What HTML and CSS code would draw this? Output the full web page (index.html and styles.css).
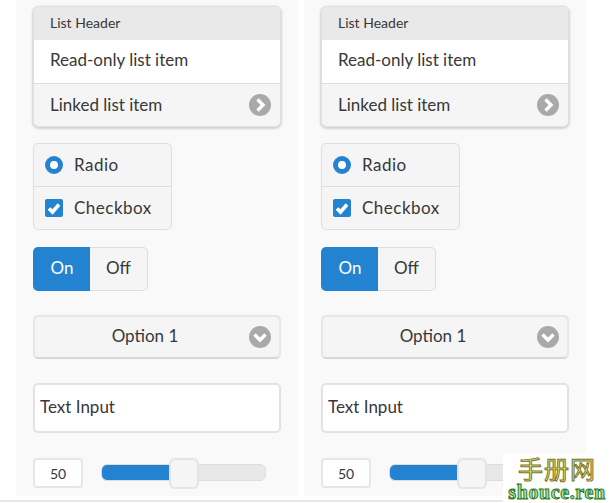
FILE: index.html
```html
<!DOCTYPE html>
<html lang="en">
<head>
    <meta charset="UTF-8">
    <meta name="viewport" content="width=device-width, initial-scale=1.0">
    <title>List and form widgets</title>
    <link rel="stylesheet" href="styles.css">
</head>
<body>
    <div class="page">
        <div class="panel">
            <div class="list">
                <div class="list-header">List Header</div>
                <div class="list-item">Read-only list item</div>
                <div class="list-item linked">Linked list item
                    <svg class="round-icon" viewBox="0 0 22 22"><circle cx="11" cy="11" r="11"/><path d="M8.5 5.5 L14 11 L8.5 16.5" /></svg>
                </div>
            </div>
            <div class="choices">
                <div class="choice">
                    <span class="radio"></span>Radio
                </div>
                <div class="choice">
                    <svg class="checkbox" viewBox="0 0 18 18"><rect width="18" height="18" rx="2"/><path d="M4 9.5 L7.5 13 L14 5.5"/></svg>Checkbox
                </div>
            </div>
            <div class="toggle">
                <div class="toggle-on">On</div>
                <div class="toggle-off">Off</div>
            </div>
            <div class="select">Option 1
                <svg class="round-icon" viewBox="0 0 22 22"><circle cx="11" cy="11" r="11"/><path d="M5.5 8.5 L11 14 L16.5 8.5" /></svg>
            </div>
            <div class="text-input">Text Input</div>
            <div class="slider-row">
                <div class="slider-value">50</div>
                <div class="slider">
                    <div class="slider-fill"></div>
                    <div class="slider-thumb"></div>
                </div>
            </div>
        </div>
        <div class="panel">
            <div class="list">
                <div class="list-header">List Header</div>
                <div class="list-item">Read-only list item</div>
                <div class="list-item linked">Linked list item
                    <svg class="round-icon" viewBox="0 0 22 22"><circle cx="11" cy="11" r="11"/><path d="M8.5 5.5 L14 11 L8.5 16.5" /></svg>
                </div>
            </div>
            <div class="choices">
                <div class="choice">
                    <span class="radio"></span>Radio
                </div>
                <div class="choice">
                    <svg class="checkbox" viewBox="0 0 18 18"><rect width="18" height="18" rx="2"/><path d="M4 9.5 L7.5 13 L14 5.5"/></svg>Checkbox
                </div>
            </div>
            <div class="toggle">
                <div class="toggle-on">On</div>
                <div class="toggle-off">Off</div>
            </div>
            <div class="select">Option 1
                <svg class="round-icon" viewBox="0 0 22 22"><circle cx="11" cy="11" r="11"/><path d="M5.5 8.5 L11 14 L16.5 8.5" /></svg>
            </div>
            <div class="text-input">Text Input</div>
            <div class="slider-row">
                <div class="slider-value">50</div>
                <div class="slider">
                    <div class="slider-fill"></div>
                    <div class="slider-thumb"></div>
                </div>
            </div>
        </div>
    </div>
    <div class="bottom-line"></div>
    <div class="watermark">
        <div class="watermark-cn">手册网</div>
        <div class="watermark-en">shouce.ren</div>
    </div>
</body>
</html>
```

FILE: styles.css
```css
html, body {
    margin: 0;
    height: 503px;
    overflow: hidden;
    background-color: #fff;
}
body {
    font-family: Lato, "Open Sans", sans-serif;
    font-size: 17px;
    color: #383838;
    position: relative;
}
.page {
    display: flex;
    gap: 6px;
    padding-left: 16px;
}
.panel {
    width: 282px;
    height: 496px;
    box-sizing: border-box;
    padding: 6px 17px 0;
    background-color: #f9f9f9;
}
.list {
    width: 248px;
    box-sizing: border-box;
    height: 121px;
    border: 1px solid #e0e0e0;
    border-radius: 6px;
    box-shadow: 0 1px 2px 1px #d4d4d4;
    overflow: hidden;
    background-color: #f5f5f5;
}
.list-header {
    height: 33px;
    line-height: 31px;
    padding-left: 16px;
    font-size: 14px;
    background-color: #e9e9e9;
}
.list-item {
    height: 43px;
    line-height: 40px;
    padding-left: 16px;
    background-color: #fff;
    border-bottom: 1px solid #ddd;
}
.list-item.linked {
    height: 42px;
    border-bottom: none;
    background-color: #f5f5f5;
    display: flex;
    align-items: center;
    justify-content: space-between;
    padding-right: 9px;
}
.round-icon {
    width: 22px;
    height: 22px;
}
.round-icon circle {
    fill: #a9a9a9;
}
.round-icon path {
    fill: none;
    stroke: #fff;
    stroke-width: 3.4;
}
.choices {
    width: 139px;
    box-sizing: border-box;
    margin-top: 16px;
    border: 1px solid #dedede;
    border-radius: 5px;
    background-color: #f5f5f5;
}
.choice {
    height: 41px;
    padding-bottom: 1px;
    display: flex;
    align-items: center;
    gap: 11px;
    padding-left: 11px;
    letter-spacing: 0.5px;
    line-height: 20px;
}
.choice + .choice {
    border-top: 1px solid #ddd;
}
.radio {
    width: 18px;
    height: 18px;
    box-sizing: border-box;
    border: 5px solid #2483d0;
    border-radius: 50%;
    background-color: #fff;
}
.checkbox {
    width: 18px;
    height: 18px;
    margin-top: 1px;
}
.checkbox rect {
    fill: #2483d0;
}
.checkbox path {
    fill: none;
    stroke: #fff;
    stroke-width: 3.6;
}
.toggle {
    display: flex;
    width: 115px;
    height: 44px;
    margin-top: 17px;
    line-height: 42px;
    text-align: center;
}
.toggle-on {
    width: 57px;
    background-color: #2483d0;
    color: #fff;
    border-radius: 5px 0 0 5px;
    padding-left: 1px;
    box-sizing: border-box;
}
.toggle-off {
    flex: 1;
    background-color: #f5f5f5;
    border: 1px solid #dedede;
    border-left: none;
    border-radius: 0 5px 5px 0;
    line-height: 40px;
}
.select {
    position: relative;
    width: 248px;
    height: 44px;
    box-sizing: border-box;
    margin-top: 24px;
    padding-right: 24px;
    border: 2px solid #e6e6e6;
    border-bottom-color: #d8d8d8;
    border-radius: 5px;
    background-color: #f5f5f5;
    line-height: 38px;
    text-align: center;
}
.select .round-icon {
    position: absolute;
    right: 8px;
    top: 9px;
}
.text-input {
    width: 248px;
    height: 50px;
    box-sizing: border-box;
    margin-top: 24px;
    padding-left: 5px;
    border: 2px solid #e2e2e2;
    border-radius: 5px;
    background-color: #fff;
    line-height: 44px;
}
.slider-row {
    display: flex;
    align-items: center;
    margin-top: 24px;
    height: 31px;
}
.slider-value {
    width: 50px;
    height: 30px;
    box-sizing: border-box;
    border: 2px solid #e6e6e6;
    border-radius: 4px;
    background-color: #fff;
    font-size: 14px;
    line-height: 27px;
    text-align: center;
}
.slider {
    position: relative;
    width: 165px;
    height: 17px;
    margin-left: 18px;
    box-sizing: border-box;
    border: 1px solid #ddd;
    border-radius: 6px;
    background-color: #e8e8e8;
}
.slider-fill {
    width: 68px;
    height: 15px;
    background-color: #2483d0;
    border-radius: 5px 0 0 5px;
}
.slider-thumb {
    position: absolute;
    left: 67px;
    top: -7px;
    width: 30px;
    height: 31px;
    box-sizing: border-box;
    border: 2px solid #e4e4e4;
    border-radius: 6px;
    background-color: #f5f5f5;
}
.bottom-line {
    height: 2px;
    margin-top: 4px;
    background-color: #e8e8e8;
}
.watermark {
    position: absolute;
    right: 0;
    bottom: 0;
    width: 108px;
    height: 50px;
    background-color: #fff;
    text-align: center;
}
.watermark-cn {
    font-family: "Noto Sans CJK SC", sans-serif;
    font-size: 25px;
    line-height: 31px;
    letter-spacing: 1px;
    color: #f4ee9a;
    -webkit-text-stroke: 1px #77741c;
}
.watermark-en {
    font-family: "Liberation Serif", serif;
    font-size: 20px;
    font-weight: bold;
    line-height: 17px;
    letter-spacing: 0.6px;
    color: #a6e5a0;
    -webkit-text-stroke: 1px #2c7a2c;
}
```
